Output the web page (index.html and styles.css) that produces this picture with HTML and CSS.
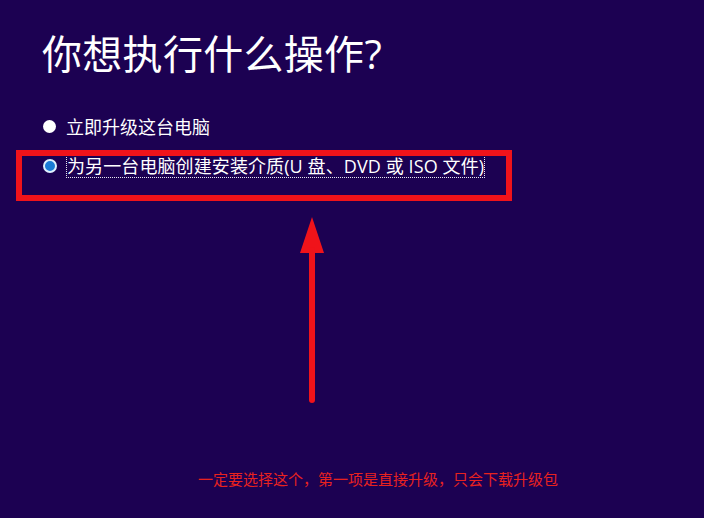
FILE: index.html
```html
<!DOCTYPE html>
<html lang="zh-CN">
<head>
<meta charset="utf-8">
<title>你想执行什么操作?</title>
<link rel="stylesheet" href="styles.css">
</head>
<body>
<main class="page">
  <h1 class="title">你想执行什么操作?</h1>
  <ul class="options">
    <li class="option">
      <span class="radio radio-idle"></span>
      <span class="label">立即升级这台电脑</span>
    </li>
    <li class="option">
      <span class="radio radio-checked"></span>
      <span class="label label-focus">为另一台电脑创建安装介质(U 盘、DVD 或 ISO 文件)</span>
    </li>
  </ul>

  <div class="mark-box"></div>
  <svg class="mark-arrow" width="24" height="188" viewBox="0 0 24 188">
    <polygon points="12,0 0,36 24,36" fill="#f0131a"/>
    <rect x="9" y="30" width="6" height="156" rx="3" fill="#f0131a"/>
  </svg>
  <p class="mark-note">一定要选择这个，第一项是直接升级，只会下载升级包</p>
</main>
</body>
</html>
```

FILE: styles.css
```css
html, body {
  margin: 0;
  padding: 0;
  background: #1c0152;
}

body {
  width: 704px;
  height: 518px;
  overflow: hidden;
  font-family: "Open Sans", "Noto Sans CJK SC", sans-serif;
  color: #ffffff;
}

.page {
  position: relative;
  height: 518px;
  padding: 28px 0 0 42px;
  box-sizing: border-box;
}

.title {
  margin: 0;
  font-size: 40px;
  line-height: 52px;
  font-weight: 400;
  letter-spacing: 0.3px;
}

.options {
  list-style: none;
  margin: 27px 0 0 0;
  padding: 0;
}

.option {
  display: flex;
  align-items: center;
  height: 39px;
  gap: 10px;
  font-size: 18px;
}

.radio {
  flex: none;
  width: 13px;
  height: 13px;
  border-radius: 50%;
  box-sizing: border-box;
  margin-left: 1px;
}

.radio-idle {
  background: #ffffff;
}

.radio-checked {
  width: 14px;
  height: 14px;
  border: 2px solid #dff0ff;
  background: #1a7bd6;
}

.label {
  line-height: 22px;
}

.label-focus {
  outline: 1px dotted #e8e8f0;
  outline-offset: 0;
  letter-spacing: 0.1px;
}

.mark-box {
  position: absolute;
  left: 16px;
  top: 150px;
  width: 496px;
  height: 51px;
  box-sizing: border-box;
  border: 6px solid #f0131a;
}

.mark-arrow {
  position: absolute;
  left: 300px;
  top: 217px;
}

.mark-note {
  position: absolute;
  left: 198px;
  top: 470px;
  margin: 0;
  font-family: "Noto Sans CJK SC", sans-serif;
  font-size: 15px;
  line-height: 18px;
  color: #e8221f;
}
```
